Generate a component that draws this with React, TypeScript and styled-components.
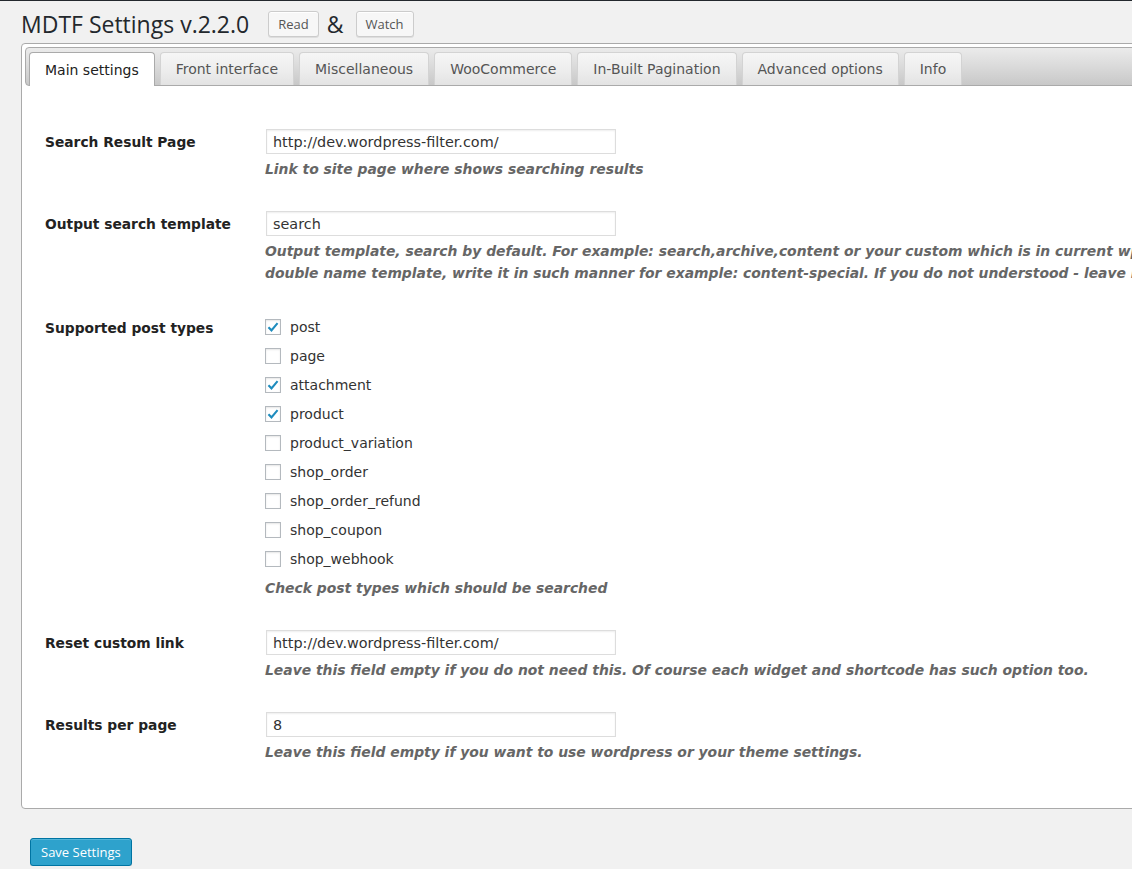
import React from 'react'
import styled, { createGlobalStyle } from 'styled-components'

const GlobalStyle = createGlobalStyle`
  html, body {
    margin: 0;
    padding: 0;
    background: #f1f1f1;
    overflow: hidden;
  }
  body {
    font-family: "DejaVu Sans", Verdana, sans-serif;
    color: #222;
  }
`

const Page = styled.div`
  border-top: 1px solid #23282d;
  padding-left: 21px;
  width: 1500px;
`

const Header = styled.div`
  display: flex;
  align-items: center;
  height: 42px;
  padding-top: 4px;
  box-sizing: border-box;
`

const Title = styled.h2`
  margin: 0;
  font-family: "Open Sans", sans-serif;
  font-weight: 400;
  font-size: 23px;
  color: #23282d;
  line-height: 29px;
`

const SmallButton = styled.button<{ $gap: number }>`
  height: 26px;
  padding: 0 9px;
  margin-left: ${(p) => p.$gap}px;
  font-family: "Open Sans", sans-serif;
  font-size: 13px;
  color: #555;
  background: #f7f7f7;
  border: 1px solid #ccc;
  border-radius: 3px;
  box-shadow: 0 1px 0 #fff inset, 0 1px 0 rgba(0, 0, 0, 0.08);
`

const Amp = styled.span`
  margin-left: 8px;
  font-family: "Open Sans", sans-serif;
  font-size: 23px;
  color: #23282d;
`

const Panel = styled.div`
  background: #fff;
  border: 1px solid #aaa;
  border-radius: 4px;
  padding: 3px;
  height: 758px;
  box-sizing: content-box;
`

const TabBar = styled.div`
  display: flex;
  align-items: flex-end;
  gap: 5px;
  padding: 4px 3px 0;
  height: 33px;
  box-sizing: content-box;
  border: 1px solid #aaa;
  border-radius: 4px;
  background: linear-gradient(#ebebeb, #dadada 50%, #c8c8c8);
`

const Tab = styled.div<{ $active?: boolean }>`
  display: flex;
  align-items: center;
  padding: 0 15px;
  box-sizing: border-box;
  font-size: 14px;
  border: 1px solid ${(p) => (p.$active ? '#aaa' : '#d3d3d3')};
  border-bottom: none;
  border-radius: 4px 4px 0 0;
  color: ${(p) => (p.$active ? '#212121' : '#555')};
  background: ${(p) =>
    p.$active ? '#fff' : 'linear-gradient(#f6f6f6, #ededed 55%, #e3e3e3)'};
  margin-bottom: ${(p) => (p.$active ? '-1px' : '0')};
  height: ${(p) => (p.$active ? '34px' : '33px')};
`

const Content = styled.div`
  padding: 28px 20px 0;
`

const Row = styled.div`
  display: flex;
`

const Label = styled.div`
  width: 220px;
  flex-shrink: 0;
  padding-top: 19px;
  font-weight: bold;
  font-size: 13.8px;
  line-height: 18px;
  color: #222;
`

const Field = styled.div`
  padding: 15px 0 16px;
`

const TextInput = styled.input`
  display: block;
  width: 350px;
  height: 25px;
  box-sizing: border-box;
  margin: 0 0 0 1px;
  padding: 0 6px;
  border: 1px solid #ddd;
  box-shadow: inset 0 1px 2px rgba(0, 0, 0, 0.07);
  font-family: "DejaVu Sans", sans-serif;
  font-size: 14.4px;
  color: #333;
  background: #fff;
`

const Description = styled.p<{ $gap?: number }>`
  margin: ${(p) => p.$gap ?? 4}px 0 0;
  font-size: 13.9px;
  line-height: 22px;
  font-weight: bold;
  font-style: italic;
  color: #666;
  white-space: nowrap;
`

const CheckList = styled.div`
  display: flex;
  flex-direction: column;
  gap: 7px;
  padding-top: 1px;
`

const CheckRow = styled.label`
  display: flex;
  align-items: center;
  height: 22px;
  font-size: 14px;
  color: #333;
`

const Box = styled.span`
  width: 16px;
  height: 16px;
  box-sizing: border-box;
  border: 1px solid #b4b9be;
  background: #fff;
  box-shadow: inset 0 1px 2px rgba(0, 0, 0, 0.1);
  margin-right: 9px;
  display: flex;
  align-items: center;
  justify-content: center;
`

const SaveButton = styled.button`
  margin: 29px 0 0 9px;
  height: 28px;
  padding: 0 10px;
  font-family: "Open Sans", sans-serif;
  font-size: 13px;
  color: #fff;
  background: #2ea2cc;
  border: 1px solid #0074a2;
  border-radius: 3px;
  box-shadow: inset 0 1px 0 rgba(120, 200, 230, 0.5), 0 1px 0 rgba(0, 0, 0, 0.15);
`

const tabs = [
  'Main settings',
  'Front interface',
  'Miscellaneous',
  'WooCommerce',
  'In-Built Pagination',
  'Advanced options',
  'Info',
]

const postTypes: [string, boolean][] = [
  ['post', true],
  ['page', false],
  ['attachment', true],
  ['product', true],
  ['product_variation', false],
  ['shop_order', false],
  ['shop_order_refund', false],
  ['shop_coupon', false],
  ['shop_webhook', false],
]

function Check() {
  return (
    <svg width="14" height="14" viewBox="0 0 20 20">
      <path d="M3.5 10.5 L7.8 14.8 L16.5 4.5" fill="none" stroke="#1e8cbe" strokeWidth="3" />
    </svg>
  )
}

export default function App() {
  return (
    <>
      <GlobalStyle />
      <Page>
        <Header>
          <Title>MDTF Settings v.2.2.0</Title>
          <SmallButton $gap={19}>Read</SmallButton>
          <Amp>&amp;</Amp>
          <SmallButton $gap={12}>Watch</SmallButton>
        </Header>

        <Panel>
          <TabBar>
            {tabs.map((t, i) => (
              <Tab key={t} $active={i === 0}>{t}</Tab>
            ))}
          </TabBar>

          <Content>
            <Row>
              <Label>Search Result Page</Label>
              <Field>
                <TextInput defaultValue="http://dev.wordpress-filter.com/" />
                <Description>Link to site page where shows searching results</Description>
              </Field>
            </Row>

            <Row>
              <Label>Output search template</Label>
              <Field>
                <TextInput defaultValue="search" />
                <Description>
                  Output template, search by default. For example: search,archive,content or your custom which is in current wp theme. If you want to set
                  <br />
                  double name template, write it in such manner for example: content-special. If you do not understood - leave it as is.
                </Description>
              </Field>
            </Row>

            <Row>
              <Label>Supported post types</Label>
              <Field>
                <CheckList>
                  {postTypes.map(([name, on]) => (
                    <CheckRow key={name}>
                      <Box>{on && <Check />}</Box>
                      {name}
                    </CheckRow>
                  ))}
                </CheckList>
                <Description $gap={7}>Check post types which should be searched</Description>
              </Field>
            </Row>

            <Row>
              <Label>Reset custom link</Label>
              <Field>
                <TextInput defaultValue="http://dev.wordpress-filter.com/" />
                <Description>
                  Leave this field empty if you do not need this. Of course each widget and shortcode has such option too.
                </Description>
              </Field>
            </Row>

            <Row>
              <Label>Results per page</Label>
              <Field>
                <TextInput defaultValue="8" />
                <Description>Leave this field empty if you want to use wordpress or your theme settings.</Description>
              </Field>
            </Row>
          </Content>
        </Panel>

        <SaveButton>Save Settings</SaveButton>
      </Page>
    </>
  )
}
